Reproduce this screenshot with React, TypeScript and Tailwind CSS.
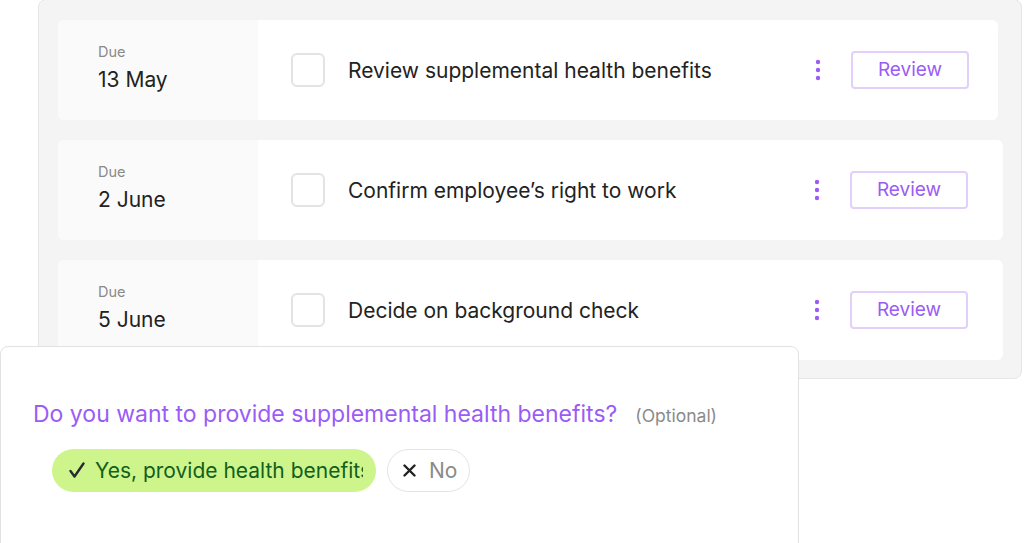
import React from "react";

const rows = [
  { date: "13 May", title: "Review supplemental health benefits", narrow: true },
  { date: "2 June", title: "Confirm employee\u2019s right to work", narrow: false },
  { date: "5 June", title: "Decide on background check", narrow: false },
];

function Kebab() {
  return (
    <svg width="6" height="22" viewBox="0 0 6 22" className="shrink-0">
      <circle cx="3" cy="3" r="2.2" fill="#9b5cf6" />
      <circle cx="3" cy="11" r="2.2" fill="#9b5cf6" />
      <circle cx="3" cy="19" r="2.2" fill="#9b5cf6" />
    </svg>
  );
}

export default function App() {
  return (
    <div
      className="relative w-[1024px] h-[543px] overflow-hidden bg-white"
      style={{ fontFamily: "Inter, 'Noto Sans', sans-serif" }}
    >
      <div className="ml-[38px] mr-[2px] h-[380px] bg-[#f4f4f4] border border-[#e6e6e6] rounded-lg -mt-[1px] pt-[20px] pl-[19px] pr-[18px] flex flex-col gap-[20px]">
        {rows.map((r, i) => (
          <div
            key={i}
            className={`h-[100px] flex rounded-md overflow-hidden bg-white ${r.narrow ? "mr-[5px]" : ""}`}
          >
            <div className="w-[200px] shrink-0 bg-[#fafafa] pl-[40px] pt-[22px]">
              <div className="text-[14.5px] leading-[20px] text-[#8a8a8a]">Due</div>
              <div className="text-[21px] leading-[28px] text-[#222] mt-[4px]">{r.date}</div>
            </div>
            <div className={`flex-1 flex items-center pl-[33px] ${r.narrow ? "pr-[29px]" : "pr-[35px]"}`}>
              <div className="w-[34px] h-[34px] rounded-[6px] border-2 border-[#e3e3e3] bg-white shrink-0" />
              <div className="ml-[23px] text-[21px] text-[#222] flex-1 whitespace-nowrap mt-[2px]">{r.title}</div>
              <Kebab />
              <button className="ml-[30px] w-[118px] h-[38px] rounded-[4px] border-2 border-[#e2cffc] bg-white text-[19px] text-[#9b5cf6] flex items-center justify-center">
                Review
              </button>
            </div>
          </div>
        ))}
      </div>

      <div className="absolute left-0 top-[346px] w-[799px] h-[210px] bg-white border border-[#e2e2e2] rounded-lg pl-[32px] pt-[52px]">
        <div className="flex items-baseline">
          <span className="text-[23px] leading-[30px] text-[#9b5cf6]">
            Do you want to provide supplemental health benefits?
          </span>
          <span className="ml-[18px] text-[17.5px] text-[#8a8a8a]">(Optional)</span>
        </div>
        <div className="flex items-center gap-[11px] mt-[20px] ml-[19px]">
          <div className="w-[324px] h-[43px] rounded-full bg-[#cdf58c] flex items-center pl-[17px] pr-[13px] overflow-hidden">
            <svg width="16" height="17" viewBox="0 0 16 17" className="mr-[10px] shrink-0">
              <path d="M1.5 9 L5.5 14.5 L14.5 1.5" stroke="#2a2a33" strokeWidth="2.4" fill="none" strokeLinecap="round" strokeLinejoin="round" />
            </svg>
            <span className="text-[21px] text-[#135f1b] whitespace-nowrap overflow-hidden">
              Yes, provide health benefits
            </span>
          </div>
          <div className="h-[43px] rounded-full border border-[#e3e3e3] bg-white flex items-center pl-[15px] pr-[12px]">
            <svg width="13" height="13" viewBox="0 0 13 13" className="mr-[13px]">
              <path d="M1.5 1.5 L11.5 11.5 M11.5 1.5 L1.5 11.5" stroke="#222" strokeWidth="2.4" strokeLinecap="round" />
            </svg>
            <span className="text-[21px] text-[#8a8a8a]">No</span>
          </div>
        </div>
      </div>
    </div>
  );
}
